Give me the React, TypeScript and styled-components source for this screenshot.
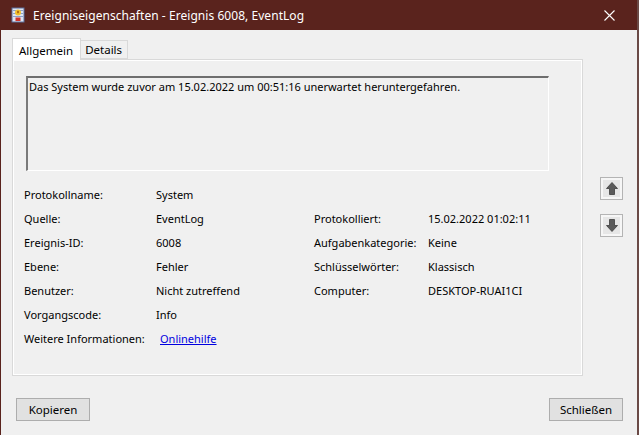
import styled, { createGlobalStyle } from 'styled-components';

const GlobalStyle = createGlobalStyle`
  html, body {
    margin: 0;
    padding: 0;
    background: #f0f0f0;
  }
  body {
    font-family: "Segoe UI", "Noto Sans", "Liberation Sans", sans-serif;
    font-size: 11px;
    color: #000;
  }
`;

const maroon = '#5a231d';

type Field = { label: string; value: string; link?: boolean };

const leftFields: Field[] = [
  { label: 'Protokollname:', value: 'System' },
  { label: 'Quelle:', value: 'EventLog' },
  { label: 'Ereignis-ID:', value: '6008' },
  { label: 'Ebene:', value: 'Fehler' },
  { label: 'Benutzer:', value: 'Nicht zutreffend' },
  { label: 'Vorgangscode:', value: 'Info' },
  { label: 'Weitere Informationen:', value: 'Onlinehilfe', link: true },
];

const rightFields: (Field | null)[] = [
  null,
  { label: 'Protokolliert:', value: '15.02.2022 01:02:11' },
  { label: 'Aufgabenkategorie:', value: 'Keine' },
  { label: 'Schlüsselwörter:', value: 'Klassisch' },
  { label: 'Computer:', value: 'DESKTOP-RUAI1CI' },
  null,
  null,
];

function WindowIcon() {
  return (
    <svg width="14" height="16" viewBox="0 0 14 16">
      <rect x="1" y="1" width="12" height="14" fill="#dfe6f3" stroke="#5b6f9c" />
      <rect x="2" y="3" width="10" height="1" fill="#8ba0c8" />
      <rect x="2" y="6" width="10" height="1" fill="#8ba0c8" />
      <rect x="2" y="9" width="10" height="1" fill="#8ba0c8" />
      <circle cx="7" cy="5.5" r="3" fill="#f2c230" />
      <rect x="6.4" y="3.8" width="1.2" height="2.4" fill="#8a3a00" />
      <rect x="4.5" y="10.5" width="5" height="3.5" fill="#d0342c" />
    </svg>
  );
}

function CloseIcon() {
  return (
    <svg width="11" height="11" viewBox="0 0 11 11">
      <path d="M0.5 0.5 L10.5 10.5 M10.5 0.5 L0.5 10.5" stroke="#fff" strokeWidth="1.1" />
    </svg>
  );
}

function ArrowIcon({ down }: { down?: boolean }) {
  return (
    <svg width="12" height="13" viewBox="0 0 12 13" style={down ? { transform: 'rotate(180deg)' } : undefined}>
      <path d="M6 0.5 L11.5 6.5 L8.5 6.5 L8.5 12.5 L3.5 12.5 L3.5 6.5 L0.5 6.5 Z" fill="#5a5a5a" stroke="#3c3c3c" strokeWidth="0.8" />
    </svg>
  );
}

export default function App() {
  return (
    <>
      <GlobalStyle />
      <Window>
        <TitleBar>
          <TitleLeft>
            <WindowIcon />
            <Title>Ereigniseigenschaften - Ereignis 6008, EventLog</Title>
          </TitleLeft>
          <CloseButton>
            <CloseIcon />
          </CloseButton>
        </TitleBar>
        <Body>
          <Main>
            <TabArea>
              <TabStrip>
                <Tab active>Allgemein</Tab>
                <Tab>Details</Tab>
              </TabStrip>
              <Panel>
                <Description>
                  Das System wurde zuvor am 15.02.2022 um 00:51:16 unerwartet heruntergefahren.
                </Description>
                <FieldGrid>
                  {leftFields.map((f, i) => {
                    const r = rightFields[i];
                    return (
                      <Row key={f.label}>
                        <Label>{f.label}</Label>
                        {f.link ? <Link>{f.value}</Link> : <Value>{f.value}</Value>}
                        <Label>{r ? r.label : ''}</Label>
                        <Value>{r ? r.value : ''}</Value>
                      </Row>
                    );
                  })}
                </FieldGrid>
              </Panel>
            </TabArea>
            <SideButtons>
              <ArrowButton>
                <ArrowIcon />
              </ArrowButton>
              <ArrowButton>
                <ArrowIcon down />
              </ArrowButton>
            </SideButtons>
          </Main>
          <Footer>
            <PushButton>Kopieren</PushButton>
            <PushButton>Schließen</PushButton>
          </Footer>
        </Body>
      </Window>
    </>
  );
}

const Window = styled.div`
  width: 639px;
  height: 435px;
  box-sizing: border-box;
  border-left: 1px solid ${maroon};
  border-right: 2px solid #6a4a46;
  background: #f0f0f0;
  display: flex;
  flex-direction: column;
  overflow: hidden;
`;

const TitleBar = styled.div`
  height: 30px;
  flex: none;
  background: ${maroon};
  display: flex;
  align-items: center;
  justify-content: space-between;
`;

const TitleLeft = styled.div`
  display: flex;
  align-items: center;
  gap: 8px;
  padding-left: 10px;
`;

const Title = styled.span`
  color: #fff;
  font-size: 12px;
  letter-spacing: 0.05px;
`;

const CloseButton = styled.div`
  width: 46px;
  height: 30px;
  display: flex;
  align-items: center;
  justify-content: center;
  margin-right: 5px;
`;

const Body = styled.div`
  flex: 1;
  display: flex;
  flex-direction: column;
  padding: 8px 12px 0 11px;
`;

const Main = styled.div`
  display: flex;
`;

const TabArea = styled.div`
  width: 571px;
  display: flex;
  flex-direction: column;
`;

const TabStrip = styled.div`
  display: flex;
  align-items: flex-end;
  height: 21px;
  position: relative;
  z-index: 1;
`;

const Tab = styled.div<{ active?: boolean }>`
  box-sizing: border-box;
  height: ${({ active }) => (active ? '22px' : '19px')};
  margin-bottom: ${({ active }) => (active ? '-1px' : '0')};
  padding: ${({ active }) => (active ? '2px 7px 0 6px' : '0 5px 0 4px')};
  background: ${({ active }) => (active ? '#ffffff' : '#f0f0f0')};
  border: 1px solid #d9d9d9;
  border-bottom: ${({ active }) => (active ? 'none' : '1px solid #d9d9d9')};
  border-left: ${({ active }) => (active ? '1px solid #d9d9d9' : 'none')};
  display: flex;
  align-items: center;
  font-size: 11.5px;
  line-height: 1;
`;

const Panel = styled.div`
  box-sizing: border-box;
  height: 317px;
  border: 1px solid #d9d9d9;
  box-shadow: inset 0 0 0 1px #ffffff;
  background: #f0f0f0;
  padding: 16px 11px 0 11px;
`;

const Description = styled.div`
  box-sizing: border-box;
  margin-left: 2px;
  width: 523px;
  height: 95px;
  border-top: 2px solid #6e6e6e;
  border-left: 2px solid #7a7a7a;
  border-right: 1px solid #ffffff;
  border-bottom: 1px solid #ffffff;
  background: #f0f0f0;
  padding: 1px 1px;
  font-size: 11px;
  line-height: 16px;
`;

const FieldGrid = styled.div`
  margin-top: 11px;
  display: flex;
  flex-direction: column;
`;

const Row = styled.div`
  display: grid;
  grid-template-columns: 132px 158px 114px 1fr;
  height: 24px;
  align-items: center;
`;

const Label = styled.span`
  font-size: 11px;
  white-space: nowrap;
`;

const Value = styled.span`
  font-size: 11px;
  white-space: nowrap;
`;

const Link = styled.span`
  font-size: 11px;
  color: #0000e0;
  text-decoration: underline;
  margin-left: 4px;
`;

const SideButtons = styled.div`
  display: flex;
  flex-direction: column;
  gap: 14px;
  padding: 139px 0 0 17px;
`;

const ArrowButton = styled.div`
  box-sizing: border-box;
  width: 23px;
  height: 23px;
  border: 1px solid #b4b4b4;
  background: #e6e6e6;
  box-shadow: inset 0 0 0 2px #f6f6f6;
  display: flex;
  align-items: center;
  justify-content: center;
`;

const Footer = styled.div`
  display: flex;
  justify-content: space-between;
  padding: 22px 2px 0 4px;
`;

const PushButton = styled.div`
  box-sizing: border-box;
  width: 74px;
  height: 23px;
  border: 1px solid #adadad;
  background: #e1e1e1;
  display: flex;
  align-items: center;
  justify-content: center;
  font-size: 11.5px;
`;
